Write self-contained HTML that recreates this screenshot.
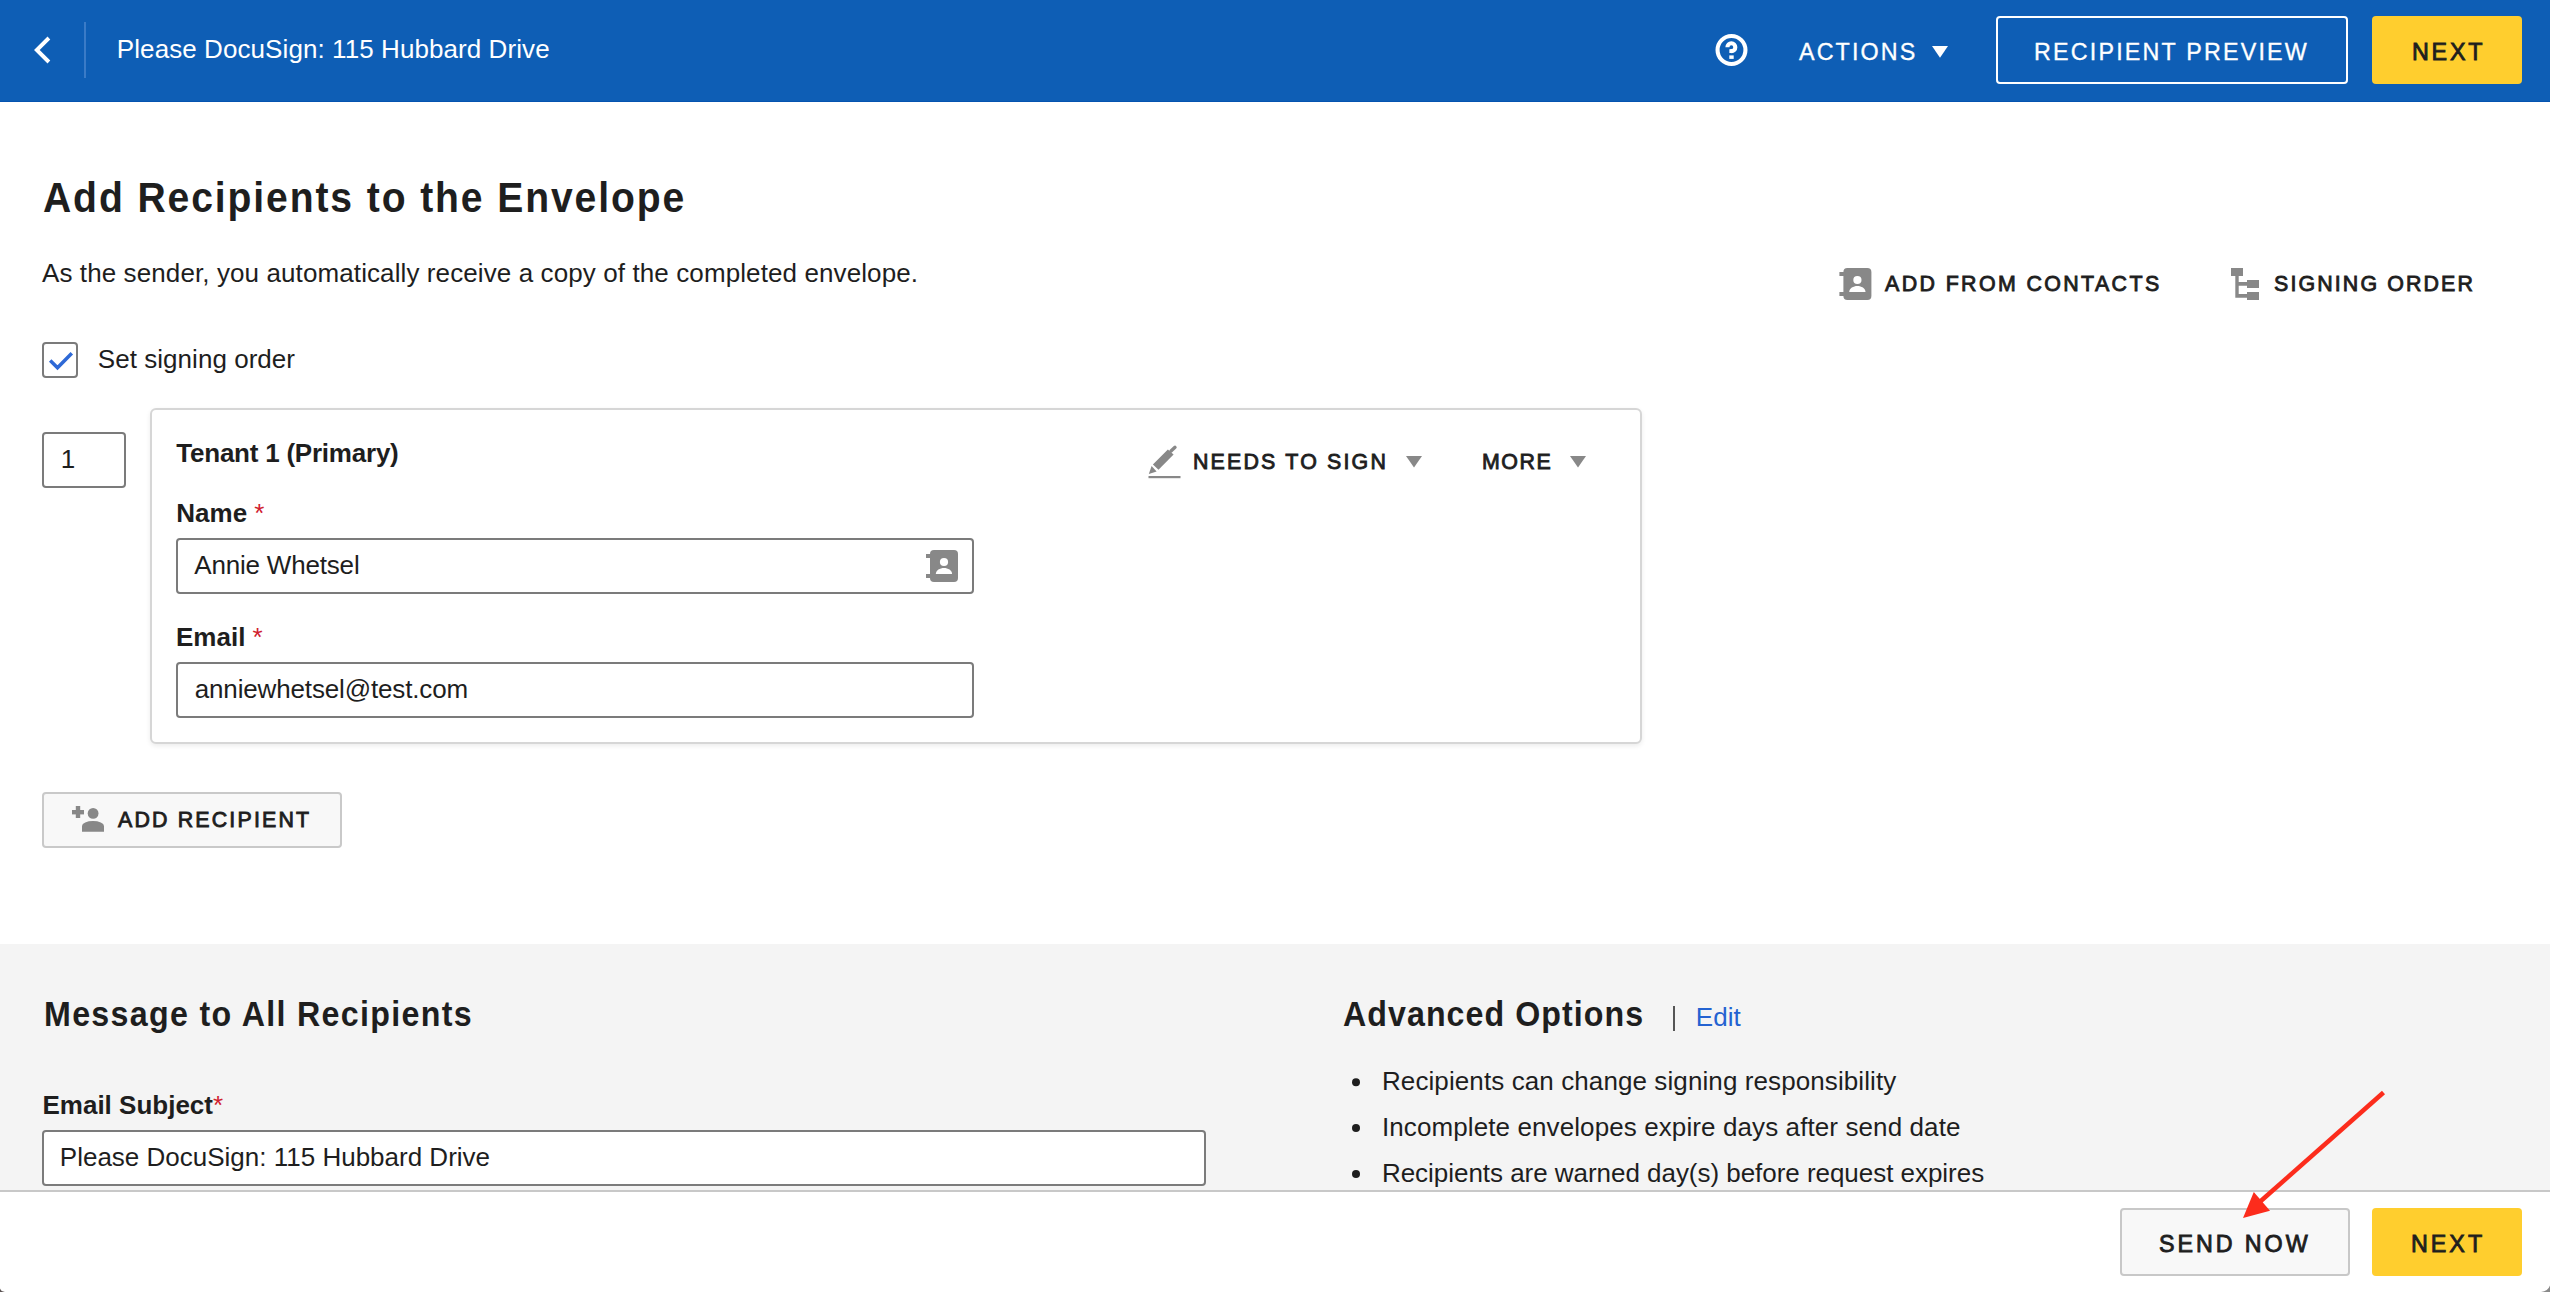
<!DOCTYPE html>
<html><head><meta charset="utf-8">
<style>
html,body{margin:0;padding:0;}
body{width:2550px;height:1292px;position:relative;overflow:hidden;background:#fff;font-family:"Liberation Sans",sans-serif;}
.t{position:absolute;white-space:nowrap;}
.b{position:absolute;box-sizing:border-box;}
.req{color:#d0202e;font-weight:normal;}
svg{position:absolute;left:0;top:0;}
</style></head><body>
<div class="b" style="left:0px;top:0px;width:2550px;height:101px;background:#0e5eb5;"></div>
<div class="b" style="left:0px;top:101px;width:2550px;height:1px;background:#0553b0;"></div>
<div class="b" style="left:0px;top:944px;width:2550px;height:246px;background:#f4f4f4;"></div>
<div class="b" style="left:0px;top:1190px;width:2550px;height:2px;background:#c8c8c8;"></div>
<div class="b" style="left:84px;top:22px;width:2px;height:56px;background:#3a7bc7;"></div>
<div class="t" style="left:116.84px;top:35.99px;font-size:26px;line-height:26px;font-weight:normal;color:#ffffff;letter-spacing:0.078px;">Please DocuSign: 115 Hubbard Drive</div>
<div class="t" style="left:1798.88px;top:39.96px;font-size:24.5px;line-height:24.5px;font-weight:normal;color:#ffffff;letter-spacing:2.253px;transform:scaleX(0.95);transform-origin:0 0;-webkit-text-stroke:0.35px #ffffff;">ACTIONS</div>
<div class="b" style="left:1996px;top:16px;width:352px;height:68px;border:2px solid #ffffff;background:transparent;border-radius:4px;"></div>
<div class="t" style="left:2034.48px;top:39.96px;font-size:24.5px;line-height:24.5px;font-weight:normal;color:#ffffff;letter-spacing:2.316px;transform:scaleX(0.95);transform-origin:0 0;-webkit-text-stroke:0.35px #ffffff;">RECIPIENT PREVIEW</div>
<div class="b" style="left:2372px;top:16px;width:150px;height:68px;border:none;background:#ffce2e;border-radius:4px;"></div>
<div class="t" style="left:2411.80px;top:39.96px;font-size:24.5px;line-height:24.5px;font-weight:normal;color:#1e1e1e;letter-spacing:2.944px;transform:scaleX(0.95);transform-origin:0 0;-webkit-text-stroke:0.9px #1e1e1e;">NEXT</div>
<div class="t" style="left:42.76px;top:177.02px;font-size:42.5px;line-height:42.5px;font-weight:bold;color:#1e1e1e;letter-spacing:2.049px;transform:scaleX(0.92);transform-origin:0 0;">Add Recipients to the Envelope</div>
<div class="t" style="left:41.96px;top:259.99px;font-size:26px;line-height:26px;font-weight:normal;color:#1e1e1e;letter-spacing:0.102px;">As the sender, you automatically receive a copy of the completed envelope.</div>
<div class="t" style="left:1885.20px;top:272.95px;font-size:22.5px;line-height:22.5px;font-weight:normal;color:#1e1e1e;letter-spacing:2.516px;transform:scaleX(0.95);transform-origin:0 0;-webkit-text-stroke:0.9px #1e1e1e;">ADD FROM CONTACTS</div>
<div class="t" style="left:2274.28px;top:272.95px;font-size:22.5px;line-height:22.5px;font-weight:normal;color:#1e1e1e;letter-spacing:2.239px;transform:scaleX(0.95);transform-origin:0 0;-webkit-text-stroke:0.9px #1e1e1e;">SIGNING ORDER</div>
<div class="b" style="left:42px;top:342px;width:36px;height:36px;border:2px solid #7b7b7b;background:transparent;border-radius:4px;"></div>
<div class="t" style="left:97.80px;top:345.99px;font-size:26px;line-height:26px;font-weight:normal;color:#1e1e1e;letter-spacing:0.040px;">Set signing order</div>
<div class="b" style="left:42px;top:432px;width:84px;height:56px;border:2px solid #7b7b7b;background:transparent;border-radius:4px;"></div>
<div class="t" style="left:60.80px;top:445.99px;font-size:26px;line-height:26px;font-weight:normal;color:#1e1e1e;letter-spacing:0.000px;">1</div>
<div class="b" style="left:150px;top:408px;width:1492px;height:336px;border:2px solid #d6d6d6;background:#ffffff;border-radius:6px;box-shadow:0 2px 5px rgba(0,0,0,0.08);"></div>
<div class="t" style="left:176.28px;top:439.99px;font-size:26px;line-height:26px;font-weight:bold;color:#1e1e1e;letter-spacing:-0.226px;">Tenant 1 (Primary)</div>
<div class="t" style="left:1193.12px;top:450.95px;font-size:22.5px;line-height:22.5px;font-weight:normal;color:#1e1e1e;letter-spacing:2.295px;transform:scaleX(0.95);transform-origin:0 0;-webkit-text-stroke:0.9px #1e1e1e;">NEEDS TO SIGN</div>
<div class="t" style="left:1482.16px;top:450.95px;font-size:22.5px;line-height:22.5px;font-weight:normal;color:#1e1e1e;letter-spacing:1.612px;transform:scaleX(0.95);transform-origin:0 0;-webkit-text-stroke:0.9px #1e1e1e;">MORE</div>
<div class="t" style="left:176.32px;top:499.99px;font-size:26px;line-height:26px;font-weight:bold;color:#1e1e1e;letter-spacing:0.000px;">Name <span class="req">*</span></div>
<div class="b" style="left:176px;top:538px;width:798px;height:56px;border:2px solid #7b7b7b;background:#fff;border-radius:4px;"></div>
<div class="t" style="left:194.28px;top:551.99px;font-size:26px;line-height:26px;font-weight:normal;color:#1e1e1e;letter-spacing:-0.187px;">Annie Whetsel</div>
<div class="t" style="left:176.00px;top:623.99px;font-size:26px;line-height:26px;font-weight:bold;color:#1e1e1e;letter-spacing:0.000px;">Email <span class="req">*</span></div>
<div class="b" style="left:176px;top:662px;width:798px;height:56px;border:2px solid #7b7b7b;background:#fff;border-radius:4px;"></div>
<div class="t" style="left:194.76px;top:675.99px;font-size:26px;line-height:26px;font-weight:normal;color:#1e1e1e;letter-spacing:-0.152px;">anniewhetsel@test.com</div>
<div class="b" style="left:42px;top:792px;width:300px;height:56px;border:2px solid #c9c9c9;background:#f8f8f8;border-radius:4px;"></div>
<div class="t" style="left:117.72px;top:808.95px;font-size:22.5px;line-height:22.5px;font-weight:normal;color:#1e1e1e;letter-spacing:2.281px;transform:scaleX(0.95);transform-origin:0 0;-webkit-text-stroke:0.9px #1e1e1e;">ADD RECIPIENT</div>
<div class="t" style="left:43.76px;top:996.37px;font-size:35px;line-height:35px;font-weight:bold;color:#1e1e1e;letter-spacing:1.434px;transform:scaleX(0.92);transform-origin:0 0;">Message to All Recipients</div>
<div class="t" style="left:1343.08px;top:996.37px;font-size:35px;line-height:35px;font-weight:bold;color:#1e1e1e;letter-spacing:1.134px;transform:scaleX(0.92);transform-origin:0 0;">Advanced Options</div>
<div class="b" style="left:1673px;top:1006px;width:2px;height:25px;background:#555555;"></div>
<div class="t" style="left:1695.84px;top:1003.99px;font-size:26px;line-height:26px;font-weight:normal;color:#2463d1;letter-spacing:0.053px;">Edit</div>
<div class="t" style="left:1381.96px;top:1067.99px;font-size:26px;line-height:26px;font-weight:normal;color:#1e1e1e;letter-spacing:0.097px;">Recipients can change signing responsibility</div>
<div class="t" style="left:1381.96px;top:1113.99px;font-size:26px;line-height:26px;font-weight:normal;color:#1e1e1e;letter-spacing:0.099px;">Incomplete envelopes expire days after send date</div>
<div class="t" style="left:1381.96px;top:1159.99px;font-size:26px;line-height:26px;font-weight:normal;color:#1e1e1e;letter-spacing:-0.038px;">Recipients are warned day(s) before request expires</div>
<div class="t" style="left:42.48px;top:1091.99px;font-size:26px;line-height:26px;font-weight:bold;color:#1e1e1e;letter-spacing:0.000px;">Email Subject<span class="req">*</span></div>
<div class="b" style="left:42px;top:1130px;width:1164px;height:56px;border:2px solid #7b7b7b;background:#fff;border-radius:4px;"></div>
<div class="t" style="left:59.84px;top:1143.99px;font-size:26px;line-height:26px;font-weight:normal;color:#1e1e1e;letter-spacing:0.000px;">Please DocuSign: 115 Hubbard Drive</div>
<div class="b" style="left:2120px;top:1208px;width:230px;height:68px;border:2px solid #c8c8c8;background:#f8f8f8;border-radius:4px;"></div>
<div class="t" style="left:2159.44px;top:1231.86px;font-size:24.5px;line-height:24.5px;font-weight:normal;color:#1e1e1e;letter-spacing:3.102px;transform:scaleX(0.95);transform-origin:0 0;-webkit-text-stroke:0.9px #1e1e1e;">SEND NOW</div>
<div class="b" style="left:2372px;top:1208px;width:150px;height:68px;border:none;background:#ffce2e;border-radius:4px;"></div>
<div class="t" style="left:2411.00px;top:1231.86px;font-size:24.5px;line-height:24.5px;font-weight:normal;color:#1e1e1e;letter-spacing:3.168px;transform:scaleX(0.95);transform-origin:0 0;-webkit-text-stroke:0.9px #1e1e1e;">NEXT</div>
<svg width="2550" height="1292" viewBox="0 0 2550 1292"><polyline points="48.9,38 36.8,50 48.9,62" fill="none" stroke="#fff" stroke-width="3.9" stroke-linecap="butt" stroke-linejoin="miter"/><circle cx="1731.5" cy="50" r="13.95" fill="none" stroke="#fff" stroke-width="4.1"/><path d="M1727.4 47.2 A3.95 3.95 0 1 1 1731.4 51.15 L1731.4 53" fill="none" stroke="#fff" stroke-width="4.1"/><rect x="1729.3" y="55.4" width="4.4" height="3.5" fill="#fff"/><polygon points="1932,46 1948,46 1940,57.7" fill="#fff"/><g fill="#888888"><rect x="1843.4" y="268" width="28" height="32" rx="4"/><rect x="1839.4" y="272" width="6" height="4"/><rect x="1839.4" y="292" width="6" height="4"/><circle cx="1857.4" cy="280" r="4.1" fill="#fff"/><path d="M1849.2 292.1 C1849.2 288 1853.4 285.9 1857.4 285.9 C1861.4 285.9 1865.5 288 1865.5 292.1 Z" fill="#fff"/></g><path fill="#888888" d="M2231 268 H2243 V276 H2238.7 V282.1 H2247 V280 H2259 V288 H2247 V285.7 H2238.7 V294 H2247 V292 H2259 V300 H2247 V297.7 H2235.3 V276 H2231 Z"/><polyline points="50.2,360.5 57.5,367.7 71.8,353.3" fill="none" stroke="#2e69d6" stroke-width="3.5"/><g fill="#888888"><rect x="1148.5" y="476" width="32" height="2.2"/><polygon points="1148.8,474 1151.6,466 1156.6,471.4"/><polygon points="1152.9,464.5 1167.9,449.5 1173.6,454.6 1158.5,469.8"/><line x1="1171" y1="451" x2="1175" y2="447.3" stroke="#888888" stroke-width="3.4" stroke-linecap="round"/></g><polygon points="1406,456 1422,456 1414,467.5" fill="#888888"/><polygon points="1570,456 1586,456 1578,467.5" fill="#888888"/><g fill="#888888"><rect x="930" y="550" width="28" height="32" rx="4"/><rect x="926" y="554" width="6" height="4"/><rect x="926" y="574" width="6" height="4"/><circle cx="944" cy="562" r="4.1" fill="#fff"/><path d="M935.8 574.1 C935.8 570 940 567.9 944 567.9 C948 567.9 952.1 570 952.1 574.1 Z" fill="#fff"/></g><g fill="#888888"><rect x="72" y="810" width="12" height="4.4"/><rect x="75.8" y="806" width="4.4" height="12"/><circle cx="93.1" cy="813.4" r="5.4"/><path d="M82 831.8 V825.9 A11 4.9 0 0 1 104 825.9 V831.8 Z"/></g><circle cx="1356" cy="1082.2" r="4" fill="#1e1e1e"/><circle cx="1356" cy="1128" r="4" fill="#1e1e1e"/><circle cx="1356" cy="1174" r="4" fill="#1e1e1e"/><line x1="2383.5" y1="1092.5" x2="2258" y2="1203.5" stroke="#fc2c1c" stroke-width="4.6"/><polygon points="2243,1218 2253.8,1192.1 2270,1210.7" fill="#fc2c1c"/><path d="M2550 1285.5 L2550 1292 L2541 1292 Q2548 1291 2550 1285.5 Z" fill="#8a8a8a"/><path d="M0 1288.5 L0 1292 L5 1292 Q1 1291.5 0 1288.5 Z" fill="#5c5454"/></svg>
</body></html>
